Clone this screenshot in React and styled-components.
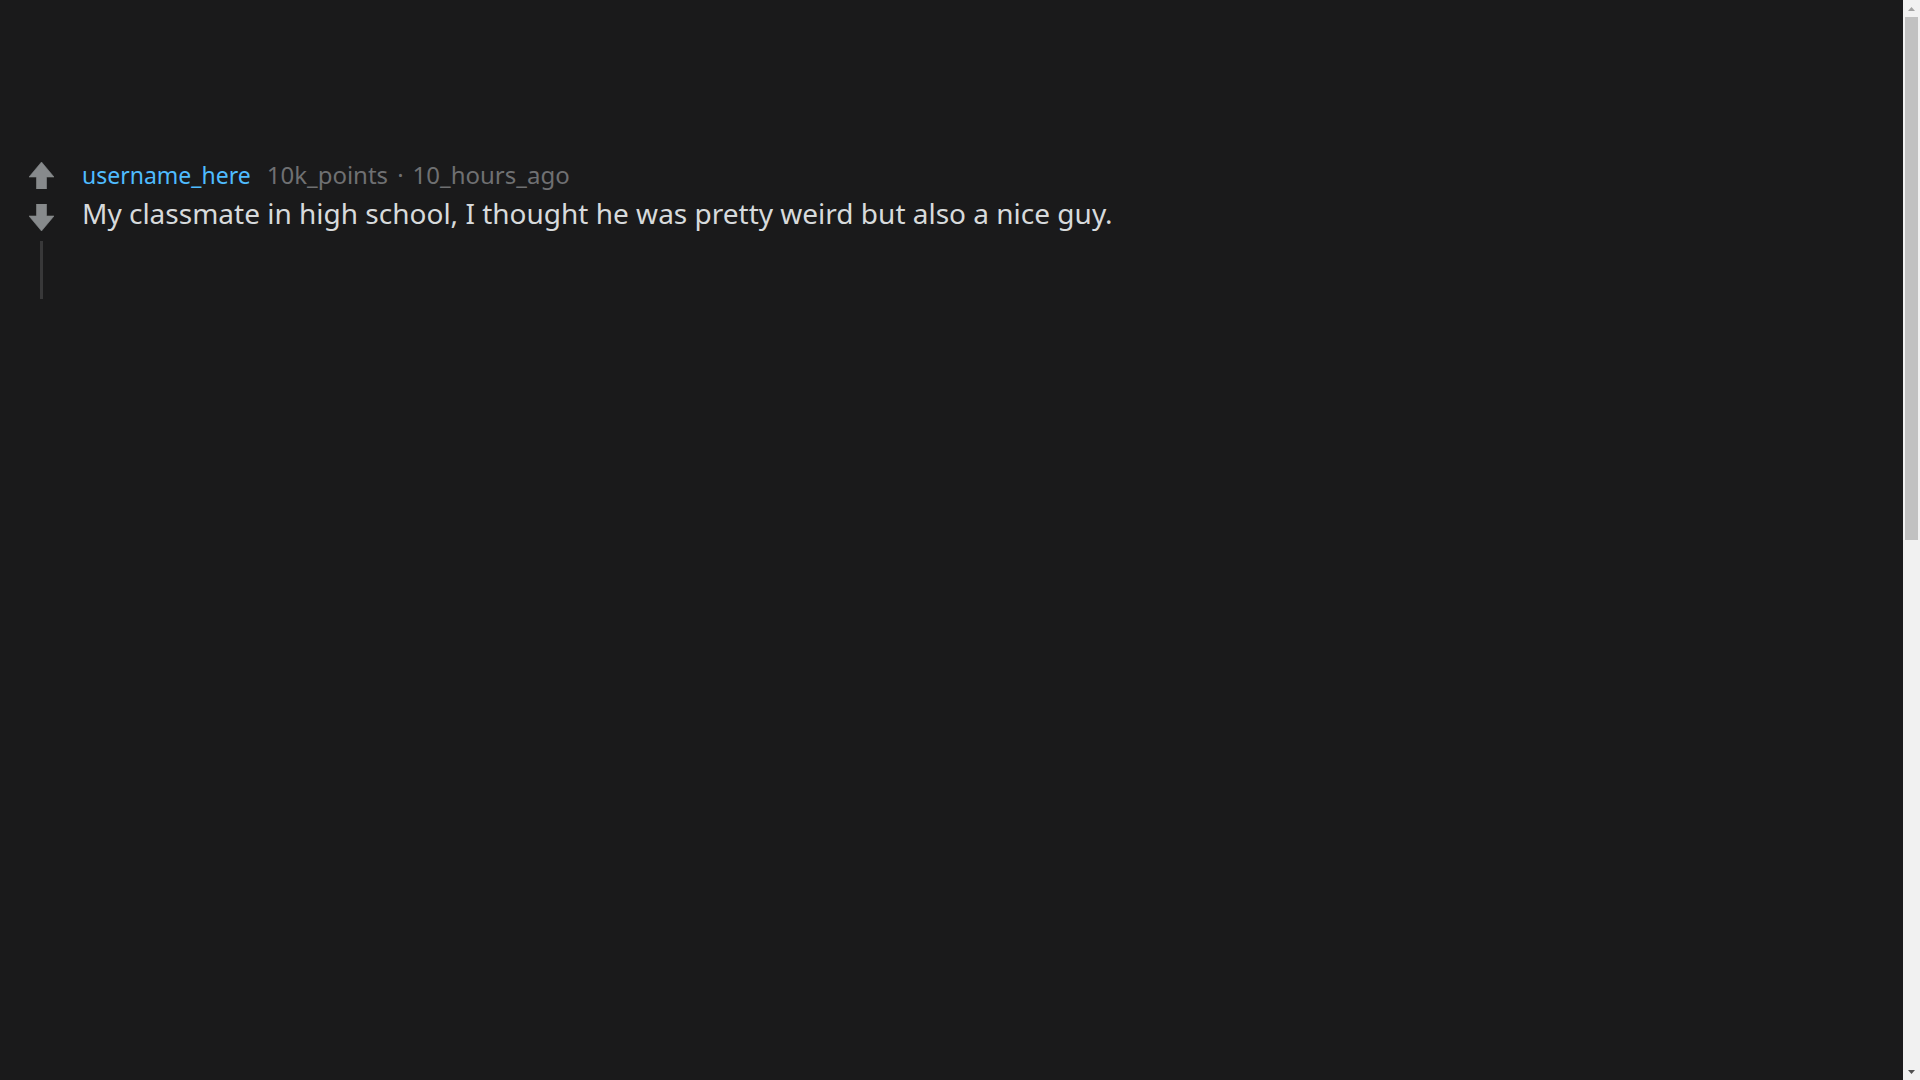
import React from "react";
import styled, { createGlobalStyle } from "styled-components";

const GlobalStyle = createGlobalStyle`
  html, body {
    margin: 0;
    padding: 0;
    background-color: #1a1a1b;
  }
  body {
    font-family: "Noto Sans", "Open Sans", sans-serif;
  }
`;

const comment = {
  username: "username_here",
  points: "10k_points",
  time: "10_hours_ago",
  body: "My classmate in high school, I thought he was pretty weird but also a nice guy.",
};

const ArrowIcon = ({ down }) => (
  <svg
    width="25"
    height="27"
    viewBox="0 0 25 27"
    style={down ? { transform: "rotate(180deg)" } : undefined}
  >
    <path
      d="M12.5 0 L25 15 L17.5 15 L17.5 27 L7.5 27 L7.5 15 L0 15 Z"
      fill="#878a8c"
      stroke="#878a8c"
      strokeWidth="0.6"
      strokeLinejoin="round"
    />
  </svg>
);

// the classic browser scrollbar seen on the right of the page
const FakeScrollbar = () => (
  <ScrollTrack>
    <ScrollButton>
      <svg width="7" height="4" viewBox="0 0 7 4">
        <path d="M3.5 0 L7 4 L0 4 Z" fill="#a3a3a3" />
      </svg>
    </ScrollButton>
    <ScrollArea>
      <ScrollThumb />
    </ScrollArea>
    <ScrollButton>
      <svg width="7" height="4" viewBox="0 0 7 4">
        <path d="M0 0 L7 0 L3.5 4 Z" fill="#505050" />
      </svg>
    </ScrollButton>
  </ScrollTrack>
);

const App = () => {
  return (
    <>
      <GlobalStyle />
      <Page>
        <Comment>
          <VoteColumn>
            <VoteButton aria-label="upvote">
              <ArrowIcon />
            </VoteButton>
            <VoteButton aria-label="downvote" $gap={15}>
              <ArrowIcon down />
            </VoteButton>
            <ThreadLine />
          </VoteColumn>
          <Content>
            <Meta>
              <Username>{comment.username}</Username>
              <MetaText>{comment.points}</MetaText>
              <Dot>·</Dot>
              <MetaText>{comment.time}</MetaText>
            </Meta>
            <Body>{comment.body}</Body>
          </Content>
        </Comment>
      </Page>
      <FakeScrollbar />
    </>
  );
};

export default App;

const Page = styled.div`
  min-height: 2160px;
  padding: 162px 17px 0 29px;
  box-sizing: border-box;
  background-color: #1a1a1b;
`;

const Comment = styled.div`
  display: flex;
  align-items: flex-start;
`;

const VoteColumn = styled.div`
  display: flex;
  flex-direction: column;
  align-items: center;
  width: 25px;
`;

const VoteButton = styled.button`
  display: flex;
  padding: 0;
  margin-top: ${(p) => p.$gap || 0}px;
  border: none;
  background: none;
  cursor: pointer;
`;

const ThreadLine = styled.div`
  width: 3px;
  height: 58px;
  margin-top: 10px;
  background-color: #383839;
`;

const Content = styled.div`
  display: flex;
  flex-direction: column;
  margin-left: 28px;
  margin-top: -3px;
`;

const Meta = styled.div`
  display: flex;
  align-items: baseline;
  font-size: 24px;
  line-height: 32px;
  color: #6f7072;
`;

const Username = styled.span`
  color: #4fbcff;
  font-size: 23px;
  margin-right: 16px;
`;

const MetaText = styled.span``;

const Dot = styled.span`
  margin: 0 9px;
`;

const Body = styled.div`
  font-size: 28px;
  line-height: 40px;
  margin-top: 2px;
  color: #d7dadc;
`;

const ScrollTrack = styled.div`
  position: fixed;
  top: 0;
  right: 0;
  width: 17px;
  height: 100vh;
  display: flex;
  flex-direction: column;
  background-color: #f1f1f1;
`;

const ScrollButton = styled.div`
  height: 17px;
  flex-shrink: 0;
  display: flex;
  align-items: center;
  justify-content: center;
`;

const ScrollArea = styled.div`
  flex: 1;
  display: flex;
  flex-direction: column;
  padding: 0 2px;
`;

const ScrollThumb = styled.div`
  height: 50%;
  background-color: #c1c1c1;
`;
